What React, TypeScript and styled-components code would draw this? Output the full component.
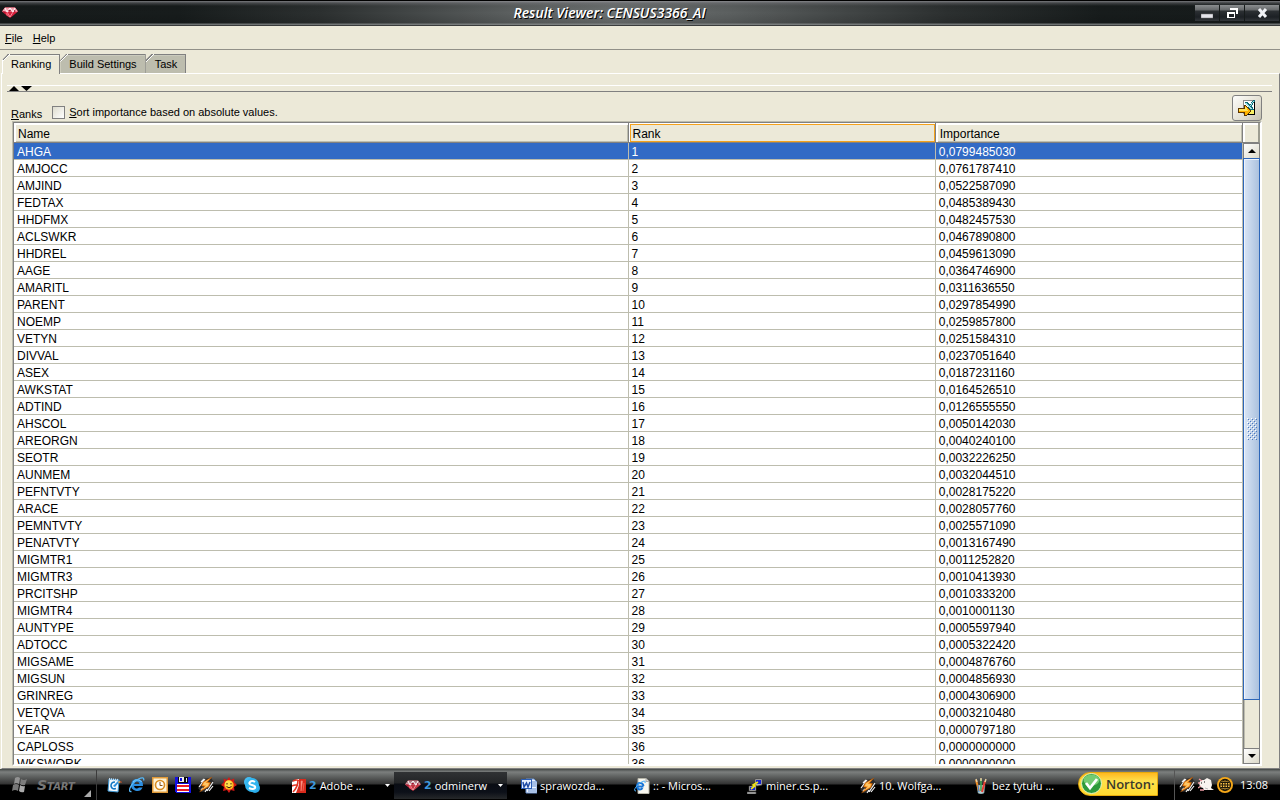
import React, { useState } from "react";
import styled, { createGlobalStyle, css } from "styled-components";

const CREAM = "#ece9d8";
const UI_FONT = '"Liberation Sans", Arial, sans-serif';
const TASK_FONT = '"Open Sans", "Noto Sans", sans-serif';

const GlobalStyle = createGlobalStyle`
  *, *::before, *::after { box-sizing: border-box; }
  html, body { margin: 0; height: 100%; overflow: hidden; }
  #root { height: 100%; }
  button, input { font: inherit; color: inherit; margin: 0; }
`;

const Desktop = styled.div`
  display: flex;
  flex-direction: column;
  height: 100vh;
  background: ${CREAM};
  color: #000;
  font: 11px/14px ${UI_FONT};
`;

/* Title bar */

const TitleBar = styled.header`
  display: flex;
  align-items: center;
  height: 26px;
  flex: none;
  padding: 0 1px 0 2px;
  border-top: 1px solid #000;
  border-bottom: 1px solid #3a3c3c;
  background: linear-gradient(
      to bottom,
      rgba(150, 150, 155, 0.75) 0,
      rgba(110, 110, 115, 0.45) 2px,
      rgba(0, 0, 0, 0.06) 5px,
      rgba(0, 0, 0, 0) 12px,
      rgba(0, 0, 0, 0.12) 22px,
      rgba(130, 134, 134, 0.8) 23px,
      rgba(130, 134, 134, 0.8) 24px
    ),
    linear-gradient(to right, #161b1b 0, #171c1c 14%, #2c3030 25%, #5c6060 40%, #6c7070 48%, #5c6060 57%, #2c3030 74%, #171c1c 86%, #161b1b 100%);
`;

const TitleText = styled.h1`
  flex: 1;
  margin: 0 0 0 6px;
  font: italic 600 14px/18px ${TASK_FONT};
  color: #fff;
  text-align: center;
  text-shadow: 1px 1px 0 #000;
  white-space: nowrap;
`;

const WindowButtons = styled.div`
  align-self: flex-start;
  display: flex;
  gap: 1px;
  padding-top: 4px;
`;

const WindowButton = styled.button<{ $wide?: boolean }>`
  display: flex;
  align-items: center;
  justify-content: center;
  width: ${(p) => (p.$wide ? 34 : 24)}px;
  height: 16px;
  padding: 0;
  border: 0;
  background: linear-gradient(to bottom, #8b8e90 0, #65686a 5px, #2c3033 6px, #1c2024 12px, #33373b 16px);
`;

/* Menu and tabs */

const MenuBar = styled.nav`
  display: flex;
  align-items: center;
  gap: 10px;
  height: 24px;
  flex: none;
  padding-left: 5px;
  border-bottom: 1px solid #919088;
`;

const MenuButton = styled.button`
  padding: 0;
  border: 0;
  background: none;
`;

const TabStrip = styled.div`
  display: flex;
  height: 23px;
  flex: none;
  padding: 4px 0 0 2px;
  position: relative;
`;

const Tab = styled.button<{ $active: boolean }>`
  height: ${(p) => (p.$active ? 20 : 19)}px;
  padding: 0 8px 0 9px;
  border: 0;
  border-right: 1px solid #808080;
  background: linear-gradient(135deg, #808080 0, #808080 5px, #fff 5px, #fff 6px, transparent 6px),
    linear-gradient(to bottom, #808080 0, #808080 1px, ${(p) => (p.$active ? "#fff" : "#d8d8cc")} 1px, transparent 2px),
    ${(p) => (p.$active ? CREAM : "#bdbdae")};
  clip-path: polygon(6px 0, 100% 0, 100% 100%, 0 100%, 0 6px);
  white-space: nowrap;
  z-index: ${(p) => (p.$active ? 1 : 0)};
  ${(p) =>
    p.$active &&
    css`
      padding-bottom: 1px;
      box-shadow: inset 1px 0 0 #fff;
    `}
`;

const Panel = styled.main`
  display: flex;
  flex-direction: column;
  flex: 1;
  min-height: 0;
  margin-left: 1px;
  padding: 10px 0 2px 0;
  border: 1px solid;
  border-color: #fff #808080 #808080 #fff;
`;

const Divider = styled.div`
  display: flex;
  gap: 1px;
  height: 7px;
  flex: none;
  margin: 1px 7px 0 5px;
  padding-left: 2px;
  border-top: 1px solid #fff;
  border-bottom: 1px solid #808080;
`;

const ArrowButton = styled.button`
  display: flex;
  width: 11px;
  height: 5px;
  padding: 0;
  border: 0;
  background: none;
`;

const OptionsRow = styled.div`
  display: flex;
  align-items: flex-end;
  height: 29px;
  flex: none;
  padding: 0 17px 0 9px;
`;

const RanksLabel = styled.span`
  margin-right: 10px;
`;

const CheckLabel = styled.label`
  display: flex;
  align-items: center;
  gap: 4px;
  padding-bottom: 2px;
`;

const Checkbox = styled.input`
  appearance: none;
  width: 13px;
  height: 13px;
  border: 1px solid #808080;
  background: linear-gradient(135deg, #dedcce, #fff);
`;

const ExportButton = styled.button`
  display: flex;
  align-items: center;
  justify-content: center;
  width: 30px;
  height: 26px;
  margin: 0 0 0 auto;
  padding: 0;
  border: 1px solid #808080;
  border-radius: 3px;
  background: linear-gradient(135deg, #fdfdfb, #e2dfd2 60%, #c2bfb0);
`;

/* Ranking table */

const ScrollPane = styled.section`
  display: flex;
  flex: 1;
  min-height: 0;
  margin: 0 17px 0 10px;
  border: 1px solid;
  border-color: #bdbdae #fff #fff #bdbdae;
`;

const PaneInner = styled.div`
  display: flex;
  flex: 1;
  min-width: 0;
  border: 1px solid;
  border-color: #808080 #fff #fff #808080;
`;

const TableView = styled.div`
  flex: 1;
  min-width: 0;
  overflow: hidden;
  background: #fff;
`;

const Table = styled.table`
  width: 100%;
  table-layout: fixed;
  border-collapse: separate;
  border-spacing: 0;
  font-size: 12px;
  line-height: 14px;
`;

const HeadCell = styled.th<{ $focused?: boolean }>`
  height: 20px;
  padding: 2px 4px 0;
  border-right: 1px solid #808080;
  border-bottom: 1px solid #808080;
  background: ${CREAM};
  box-shadow: ${(p) =>
    p.$focused
      ? "inset 1px 1px 0 #fff, inset 2px 2px 0 #f5a21b, inset 0 -1px 0 #f5a21b, inset -1px 0 0 #f5a21b"
      : "inset 2px 2px 0 #fff, inset -1px -1px 0 #bdbdae"};
  font-weight: normal;
  text-align: left;
  &:first-child { width: 50%; }
  &:nth-child(2) { width: 25%; }
`;

const Row = styled.tr<{ $selected?: boolean }>`
  background: ${(p) => (p.$selected ? "#316ac5" : "#fff")};
  color: ${(p) => (p.$selected ? "#fff" : "#000")};
`;

const Cell = styled.td`
  height: 17px;
  padding: 2px 3px 0;
  border-right: 1px solid #bdbdae;
  border-bottom: 1px solid #bdbdae;
  white-space: nowrap;
`;

const ScrollColumn = styled.div`
  display: flex;
  flex-direction: column;
  width: 17px;
  flex: none;
  background: ${CREAM};
`;

const Corner = styled.div`
  height: 20px;
  flex: none;
  border-right: 2px solid #9c9c90;
  border-bottom: 1px solid #808080;
  box-shadow: inset 2px 2px 0 #fff;
`;

const ScrollButton = styled.button`
  display: flex;
  align-items: center;
  justify-content: center;
  height: 16px;
  flex: none;
  padding: 0;
  border: 1px solid #808080;
  background: linear-gradient(135deg, #fff, #dcd9c8);
`;

const Track = styled.div`
  display: flex;
  flex-direction: column;
  flex: 1;
  min-height: 0;
  border: solid #808080;
  border-width: 0 1px;
  box-shadow: inset 1px 0 0 #bdbdae;
`;

const Thumb = styled.div`
  display: flex;
  align-items: center;
  justify-content: center;
  height: 92%;
  margin: -1px -1px 0;
  border: 1px solid #2d66b8;
  box-shadow: inset 1px 1px 0 #eef4fc;
  background: linear-gradient(to right, #d9e5f5, #abc1de);
`;

/* Taskbar */

const TaskBar = styled.footer`
  display: flex;
  height: 31px;
  flex: none;
  border-top: 1px solid #4c504e;
  background: linear-gradient(to bottom, #585c5b 0, #7c7f7e 2px, #686b6a 5px, #333 14px, #000 15px, #000 100%);
  color: #fff;
  font: 11px/16px ${TASK_FONT};
`;

const StartButton = styled.button`
  display: flex;
  align-items: center;
  gap: 8px;
  width: 97px;
  flex: none;
  padding: 0 5px 0 11px;
  border: 0;
  border-right: 1px solid #3c3c3c;
  background: none;
  color: #777;
`;

const StartText = styled.span`
  font: italic 700 14px/16px "DejaVu Sans", sans-serif;
  font-variant: small-caps;
`;

const StartCorner = styled.svg`
  align-self: flex-end;
  flex: none;
  margin: 0 0 3px auto;
`;

const QuickLaunch = styled.div`
  display: flex;
  align-items: center;
  gap: 7px;
  width: 184px;
  flex: none;
  padding-left: 9px;
`;

const IconButton = styled.button`
  display: flex;
  padding: 0;
  border: 0;
  background: none;
`;

const Tasks = styled.div`
  display: grid;
  grid-auto-flow: column;
  grid-auto-columns: minmax(0, 1fr);
  flex: 1;
  min-width: 0;
`;

const TaskButton = styled.button<{ $active?: boolean; $grouped?: boolean }>`
  display: flex;
  align-items: center;
  gap: 3px;
  min-width: 0;
  margin: 2px 0 1px;
  padding: 0 4px 0 ${(p) => (p.$grouped ? 11 : 14)}px;
  border: 0;
  background: ${(p) => (p.$active ? "linear-gradient(to bottom, #303234 0, #222426 11px, #0a0d14 12px, #0c1018 20px, #26282a 27px)" : "none")};
  white-space: nowrap;
`;

const Count = styled.b`
  color: #3d97dc;
  font-family: "DejaVu Sans", sans-serif;
`;

const DropMark = styled.svg`
  margin-left: auto;
`;

const Norton = styled.button`
  display: flex;
  align-items: center;
  gap: 4px;
  width: 80px;
  height: 24px;
  flex: none;
  align-self: center;
  margin: 0 16px 3px 6px;
  padding: 0 0 0 2px;
  border: 1px solid #e6a90c;
  border-radius: 12px 0 0 12px;
  background: linear-gradient(to bottom, #ffb81f 0, #ffe04c 8px, #ffd92f 100%);
  color: #3b3a2c;
  font: 600 13px/20px ${TASK_FONT};
`;

const Tray = styled.div`
  display: flex;
  align-items: center;
  gap: 3px;
  width: 106px;
  flex: none;
  padding-left: 4px;
  border-left: 1px solid #555;
`;

const Clock = styled.time`
  margin-left: 4px;
`;

/* Icons */

const Diamond = ({ dim = false }: { dim?: boolean }) => (
  <svg width="16" height="16" viewBox="0 0 16 16" aria-hidden="true">
    <path d="M3 2.500h10l3 4-6 5-2 1.500-2-1.500-6-5z" fill={dim ? "#c03540" : "#d8203c"} />
    <path d="M3 2.500h10l3 4H0z" fill={dim ? "#b08088" : "#f6a2b0"} />
    <path d="M3 3l2 4 3-4 3 4 2-4" fill="none" stroke="#fff" strokeWidth="1" />
    <path d="M1 6h14M5 7l3 5 3-5" fill="none" stroke="#ffd6dc" strokeWidth=".6" />
    <path d="M1 6l3 1-2 1zM6 5h3l-1 2zM12 5l2 1-2 1z" fill="#a20c28" />
    <path d="M4 8h2l1 4-3-2z" fill="#ef5266" />
  </svg>
);

const ExportIcon = () => (
  <svg width="18" height="18" viewBox="0 0 18 18" shapeRendering="crispEdges" aria-hidden="true">
    <path d="M5 1h10v1h2v13H5z" fill="#8a8a8a" />
    <path d="M6 2h9v1h1v12H6z" fill="#fff" />
    <path d="M16 3h1v13H9v-1h7z" fill="#000" />
    <path d="M13 10h3v5h-5v-2z" fill="#f6ef62" />
    <path d="M6 3h4l2 3 3-5h2v1l-3 5 2 4h-4l-1-2-2 2H7l3-4z" fill="#0c6c78" />
    <path d="M7 4h2l5 6h-2zM15 2h1l-4 6h-1z" fill="#a5e3e6" />
    <path d="M0 9h6V6h2v1h1v1h1v1h1v1h1v1h1v2h-1v1h-1v1h-1v1H9v1H6v-3H0z" fill="#5e3600" />
    <path d="M1 10h6V7h1v1h1v1h1v1h1v1h1v2h-1v1h-1v1H9v1H7v-3H1z" fill="#ffb400" />
    <path d="M1 10h6V8h1v1h1v2h1v1H1z" fill="#ffe35a" />
  </svg>
);

const FlagIcon = () => (
  <svg width="18" height="18" viewBox="0 0 18 18" aria-hidden="true">
    <g fill="#929292">
      <path d="M4 2q3-2 5 0L8 8Q5 6 3 8z" />
      <path d="M10 3q3 2 6 0l-2 6q-3 1-5-1z" fill="#7d7d7d" />
      <path d="M2 9q3-2 6 0l-1 6q-3-2-6 0z" fill="#777" />
      <path d="M9 9q3 2 5 1l-1 6q-3 1-5-1z" fill="#aaa" />
    </g>
  </svg>
);

const NotepadIcon = () => (
  <svg width="16" height="16" viewBox="0 0 16 16" aria-hidden="true">
    <path d="M3 2l10 1-1 12-10-1z" fill="#f4faff" stroke="#3c96d2" />
    <path d="M3 2l10 1" stroke="#cde" strokeDasharray="1 1" strokeWidth="2" />
    <path d="M9 5Q5 5 5 9q1 4 5 2.500" fill="none" stroke="#1478c5" strokeWidth="1.600" />
    <path d="M7 9l6-6 1 1-5 6z" fill="#2b8ddb" />
    <path d="M12 5l1-1 2 1-2 1z" fill="#ffb54e" />
    <path d="M14 4l2 1-1 1z" fill="#d24a22" />
  </svg>
);

const IeIcon = () => (
  <svg width="16" height="16" viewBox="0 0 16 16" aria-hidden="true">
    <path d="M8 2a6 6 0 1 0 5.600 8.500H10q-1.500 1.500-3.500.8Q5 10.500 5 9h9q.3-7-6-7zM5.200 7Q5.800 4.500 8 4.500T10.500 7z" fill="#2c8ee0" fillRule="evenodd" />
    <path d="M4 5q2-3 6-2 2 .7 2.500 2" fill="none" stroke="#9adcff" strokeWidth=".8" />
    <path d="M2.500 14.500Q-.5 15 1 11 3.500 5 9.500 2q6-2.800 5.200 1.500" fill="none" stroke="#56b8f8" strokeWidth="1.300" />
  </svg>
);

const OutlookIcon = () => (
  <svg width="16" height="16" viewBox="0 0 16 16" aria-hidden="true">
    <rect x=".75" y=".75" width="14.500" height="14.500" fill="#fff2d2" stroke="#df9938" strokeWidth="1.500" />
    <circle cx="8" cy="8" r="4.500" fill="#fffef8" stroke="#d98c20" strokeWidth="1.600" />
    <path d="M8 5v3.500h2.500" fill="none" stroke="#8c5414" />
  </svg>
);

const FloppyIcon = () => (
  <svg width="16" height="16" viewBox="0 0 16 16" shapeRendering="crispEdges" aria-hidden="true">
    <path d="M0 0h15l1 1v15H1l-1-1z" fill="#1410e2" />
    <path d="M3 0h10v6H3z" fill="#080808" />
    <path d="M4 0h5v5H4zM11 1h1v4h-1z" fill="#eee" />
    <path d="M5 1h2v3H5z" fill="#1410e2" />
    <path d="M2 7h12v8H2z" fill="#fff" />
    <path d="M2 8h12v2H2zM2 12h12v2H2z" fill="#ed1d24" />
  </svg>
);

const BoltIcon = () => (
  <svg width="16" height="16" viewBox="0 0 16 16" aria-hidden="true">
    <path d="M5 2l8-1 3 4-6 9-7 1-3-4z" fill="#2a2a2a" />
    <path d="M1 10l6-8M3 13l2-2M3 5l3-3M9 14l6-9M11 14l4-5M7 15l2-3" stroke="#f4f4f4" strokeWidth="1.200" />
    <path d="M14 0L5 5 3.500 9l3 .5L1.500 15 11 9.500l1.500-4-3-.5z" fill="#f88c18" stroke="#a34a00" strokeWidth=".4" />
    <path d="M12 1.500L6 5.500 5 8l3 .5-4 4L10 9l1-2.800-3.500-.4z" fill="#ffc768" />
  </svg>
);

const SunIcon = () => (
  <svg width="16" height="16" viewBox="0 0 16 16" aria-hidden="true">
    <path d="M8 0l1.700 3 3.600-1.600L13 5l3 3-3 2 .5 4-3.700-1L8 16l-2-3-4 1 1-4-3-2 3-3-.5-3.500L6 3z" fill="#d51a14" />
    <circle cx="8" cy="8" r="4.700" fill="#ffb81d" />
    <circle cx="7.500" cy="7" r="3.500" fill="#ffdf4a" />
    <path d="M6 6v1.500M10 6v1.500M5.500 9.500q2.500 2.500 5 0" fill="none" stroke="#44200c" />
  </svg>
);

const SkypeIcon = () => (
  <svg width="16" height="16" viewBox="0 0 16 16" aria-hidden="true">
    <circle cx="5" cy="5" r="5" fill="#45bdf3" />
    <circle cx="11" cy="11" r="5" fill="#29a9e8" />
    <circle cx="8" cy="8" r="7" fill="#32b5ef" />
    <path d="M11 5Q8 3 6 5t2 3q4 1 3 3-2 2-6 0" fill="none" stroke="#fff" strokeWidth="2" />
  </svg>
);

const PdfIcon = () => (
  <svg width="14" height="16" viewBox="0 0 14 16" aria-hidden="true">
    <path d="M0 4l5-3h9v14H0z" fill="#d92a1c" />
    <path d="M0 4l5-3h2v6l-3 8H0z" fill="#fff" />
    <path d="M1 3q4-2 6 0M6 2Q6 9 1 14M0 8q4-2 6 0" fill="none" stroke="#e13522" strokeWidth="1.600" />
    <path d="M9 3l1.500 0L9 13zM12 5l-1 8" fill="#ffb4a4" stroke="#f3776a" strokeWidth=".7" />
  </svg>
);

const WordIcon = () => (
  <svg width="16" height="16" viewBox="0 0 16 16" aria-hidden="true">
    <path d="M5 1h8l3 3v11H5z" fill="#edf4ff" stroke="#6c92cf" />
    <path d="M11 4h4M11 6h4M11 8h4M7 11h8M7 13h8" stroke="#618acb" />
    <rect x=".5" y="1.500" width="10" height="9" fill="#e9f1ff" stroke="#2b5db5" />
    <path d="M2 4l1 5 2.500-4L7 9l2-5" fill="none" stroke="#204ca6" strokeWidth="1.500" />
  </svg>
);

const IePageIcon = () => (
  <svg width="16" height="16" viewBox="0 0 16 16" aria-hidden="true">
    <path d="M4 .5h8l3 3v12H4z" fill="#f8f7ef" stroke="#b8b7aa" />
    <path d="M12 .5v3h3" fill="#ddd" stroke="#aaa" />
    <path d="M9.500 8.500H3q.5 3 3 3 1.500 0 2.500-1.500" fill="none" stroke="#1975d6" strokeWidth="2" />
    <path d="M9.500 8Q9 5 6 5T3 8.500" fill="none" stroke="#1975d6" strokeWidth="2" />
    <path d="M2 13Q-1 13 2 9q3-5 8-6 2 0 1 2" fill="none" stroke="#4cacf4" />
  </svg>
);

const PuttyIcon = () => (
  <svg width="16" height="16" viewBox="0 0 16 16" aria-hidden="true">
    <path d="M8 1h7v6l-5 1-2-1zM2 8h7v5H2zM0 14h9v2H0z" fill="#b5b5b5" stroke="#444" strokeWidth=".6" />
    <path d="M9 2h5v4H9zM3 9h5v3H3z" fill="#1624d3" />
    <path d="M11 4L6 7l2 1-4 3" fill="none" stroke="#f5e416" strokeWidth="1.600" />
  </svg>
);

const PaintIcon = () => (
  <svg width="16" height="16" viewBox="0 0 16 16" aria-hidden="true">
    <path d="M4 7h8l-1 8q-3 2-6 0z" fill="#b4cdd1" stroke="#6b8a8e" strokeWidth=".5" />
    <path d="M3 2l3 11" stroke="#f28f27" strokeWidth="2" />
    <path d="M8 1v12" stroke="#40a552" strokeWidth="1.600" />
    <path d="M12 3l-3 11" stroke="#e73e32" strokeWidth="2" />
    <path d="M3 1l1 3M8 0v3M13 1l-1 3" stroke="#ead1a4" strokeWidth="1.500" />
    <path d="M5 7l1 7" stroke="#3e83d9" />
  </svg>
);

const MouseIcon = () => (
  <svg width="16" height="16" viewBox="0 0 16 16" aria-hidden="true">
    <path d="M3 3l3 0 3-2 4 2 1 5-1 3 3 2H6l-1-2-3-1-1-4z" fill="#f8f4ef" />
    <path d="M1 2l3 2M0 6h2M0 11l3-2M6 13H2" stroke="#ed9ba2" strokeWidth="1.300" />
    <path d="M3 6h1M6 5h1" stroke="#111" strokeWidth="1.200" />
    <path d="M7 11l3 1" stroke="#bbb" />
  </svg>
);

const GlobeIcon = () => (
  <svg width="16" height="16" viewBox="0 0 16 16" aria-hidden="true">
    <circle cx="8" cy="8" r="8" fill="#f6a819" />
    <circle cx="8" cy="8" r="5.500" fill="#ffc549" stroke="#1c1709" strokeWidth="1.300" />
    <path d="M2.500 8h11M8 2.500v11M4 5.500h8M4 10.500h8" stroke="#1c1709" />
    <ellipse cx="8" cy="8" rx="2.700" ry="5.500" fill="none" stroke="#1c1709" />
  </svg>
);

const CheckBadge = () => (
  <svg width="21" height="21" viewBox="0 0 21 21" aria-hidden="true">
    <circle cx="10.500" cy="10.500" r="10" fill="#2d9a3b" stroke="#e5f4c3" />
    <ellipse cx="10.500" cy="7" rx="8" ry="5.500" fill="#75cc72" />
    <path d="M5 10l4 5 7-9" fill="none" stroke="#fff" strokeWidth="2.800" />
  </svg>
);

const Triangle = ({ up }: { up?: boolean }) => (
  <svg width="11" height="5" viewBox="0 0 11 5" aria-hidden="true">
    <path d={up ? "M0 5h10L5 0z" : "M0 0h11L5.500 5z"} fill="#000" />
  </svg>
);

const SmallTriangle = ({ up }: { up?: boolean }) => (
  <svg width="8" height="4" viewBox="0 0 8 4" aria-hidden="true">
    <path d={up ? "M0 4h8L4 0z" : "M0 0h8L4 4z"} fill="#000" />
  </svg>
);

const Grip = () => (
  <svg width="10" height="22" aria-hidden="true">
    <defs>
      <pattern id="grip" width="4" height="4" patternUnits="userSpaceOnUse">
        <path d="M0 0h1v1H0zM2 2h1v1H2z" fill="#fff" />
        <path d="M1 1h1v1H1zM3 3h1v1H3z" fill="#4a78c0" />
      </pattern>
    </defs>
    <rect width="10" height="22" fill="url(#grip)" />
  </svg>
);

const rankings: [string, number, string][] = [
  ["AHGA", 1, "0,0799485030"],
  ["AMJOCC", 2, "0,0761787410"],
  ["AMJIND", 3, "0,0522587090"],
  ["FEDTAX", 4, "0,0485389430"],
  ["HHDFMX", 5, "0,0482457530"],
  ["ACLSWKR", 6, "0,0467890800"],
  ["HHDREL", 7, "0,0459613090"],
  ["AAGE", 8, "0,0364746900"],
  ["AMARITL", 9, "0,0311636550"],
  ["PARENT", 10, "0,0297854990"],
  ["NOEMP", 11, "0,0259857800"],
  ["VETYN", 12, "0,0251584310"],
  ["DIVVAL", 13, "0,0237051640"],
  ["ASEX", 14, "0,0187231160"],
  ["AWKSTAT", 15, "0,0164526510"],
  ["ADTIND", 16, "0,0126555550"],
  ["AHSCOL", 17, "0,0050142030"],
  ["AREORGN", 18, "0,0040240100"],
  ["SEOTR", 19, "0,0032226250"],
  ["AUNMEM", 20, "0,0032044510"],
  ["PEFNTVTY", 21, "0,0028175220"],
  ["ARACE", 22, "0,0028057760"],
  ["PEMNTVTY", 23, "0,0025571090"],
  ["PENATVTY", 24, "0,0013167490"],
  ["MIGMTR1", 25, "0,0011252820"],
  ["MIGMTR3", 26, "0,0010413930"],
  ["PRCITSHP", 27, "0,0010333200"],
  ["MIGMTR4", 28, "0,0010001130"],
  ["AUNTYPE", 29, "0,0005597940"],
  ["ADTOCC", 30, "0,0005322420"],
  ["MIGSAME", 31, "0,0004876760"],
  ["MIGSUN", 32, "0,0004856930"],
  ["GRINREG", 33, "0,0004306900"],
  ["VETQVA", 34, "0,0003210480"],
  ["YEAR", 35, "0,0000797180"],
  ["CAPLOSS", 36, "0,0000000000"],
  ["WKSWORK", 36, "0,0000000000"],
];

const quickLaunch = [
  { label: "Notepad", icon: <NotepadIcon /> },
  { label: "Internet Explorer", icon: <IeIcon /> },
  { label: "Outlook", icon: <OutlookIcon /> },
  { label: "Commander", icon: <FloppyIcon /> },
  { label: "Winamp", icon: <BoltIcon /> },
  { label: "Messenger", icon: <SunIcon /> },
  { label: "Skype", icon: <SkypeIcon /> },
];

const tasks: { text: string; icon: React.ReactNode; count?: number; active?: boolean }[] = [
  { text: "Adobe ...", icon: <PdfIcon />, count: 2 },
  { text: "odminerw", icon: <Diamond dim />, count: 2, active: true },
  { text: "sprawozda...", icon: <WordIcon /> },
  { text: ":: - Micros...", icon: <IePageIcon /> },
  { text: "miner.cs.p...", icon: <PuttyIcon /> },
  { text: "10. Wolfga...", icon: <BoltIcon /> },
  { text: "bez tytułu ...", icon: <PaintIcon /> },
];

const tabs = ["Ranking", "Build Settings", "Task"];

export default function App() {
  const [tab, setTab] = useState("Ranking");
  const [selected, setSelected] = useState(0);

  return (
    <Desktop>
      <GlobalStyle />
      <TitleBar>
        <Diamond />
        <TitleText>Result Viewer: CENSUS3366_AI</TitleText>
        <WindowButtons>
          <WindowButton aria-label="Minimize">
            <svg width="12" height="12"><path d="M0 7h12v4H0z" fill="#e4e4ea" stroke="#777" strokeWidth=".5" /></svg>
          </WindowButton>
          <WindowButton aria-label="Restore">
            <svg width="11" height="12" shapeRendering="crispEdges">
              <path d="M3 1h8v6H9V3H3zM0 5h8v6H0zM2 7v3h5V7z" fill="#fff" fillRule="evenodd" />
            </svg>
          </WindowButton>
          <WindowButton aria-label="Close" $wide>
            <svg width="11" height="11"><path d="M2 1l7 8M9 1L2 9" stroke="#f0f2f6" strokeWidth="3" /></svg>
          </WindowButton>
        </WindowButtons>
      </TitleBar>

      <MenuBar>
        <MenuButton><u>F</u>ile</MenuButton>
        <MenuButton><u>H</u>elp</MenuButton>
      </MenuBar>

      <TabStrip role="tablist">
        {tabs.map((name) => (
          <Tab key={name} role="tab" aria-selected={tab === name} $active={tab === name} onClick={() => setTab(name)}>
            {name}
          </Tab>
        ))}
      </TabStrip>

      <Panel>
        <Divider>
          <ArrowButton aria-label="Collapse"><Triangle up /></ArrowButton>
          <ArrowButton aria-label="Expand"><Triangle /></ArrowButton>
        </Divider>
        <OptionsRow>
          <RanksLabel><u>R</u>anks</RanksLabel>
          <CheckLabel>
            <Checkbox type="checkbox" />
            <span><u>S</u>ort importance based on absolute values.</span>
          </CheckLabel>
          <ExportButton aria-label="Export"><ExportIcon /></ExportButton>
        </OptionsRow>

        <ScrollPane>
          <PaneInner>
            <TableView>
              <Table>
                <thead>
                  <tr>
                    <HeadCell scope="col">Name</HeadCell>
                    <HeadCell scope="col" $focused>Rank</HeadCell>
                    <HeadCell scope="col">Importance</HeadCell>
                  </tr>
                </thead>
                <tbody>
                  {rankings.map(([name, rank, importance], i) => (
                    <Row key={name} $selected={i === selected} onClick={() => setSelected(i)}>
                      <Cell>{name}</Cell>
                      <Cell>{rank}</Cell>
                      <Cell>{importance}</Cell>
                    </Row>
                  ))}
                </tbody>
              </Table>
            </TableView>
            <ScrollColumn>
              <Corner />
              <ScrollButton aria-label="Scroll up"><SmallTriangle up /></ScrollButton>
              <Track>
                <Thumb><Grip /></Thumb>
              </Track>
              <ScrollButton aria-label="Scroll down"><SmallTriangle /></ScrollButton>
            </ScrollColumn>
          </PaneInner>
        </ScrollPane>
      </Panel>

      <TaskBar>
        <StartButton>
          <FlagIcon />
          <StartText>Start</StartText>
          <StartCorner width="7" height="7" aria-hidden="true"><path d="M7 0v7H0z" fill="#aaa" /></StartCorner>
        </StartButton>
        <QuickLaunch>
          {quickLaunch.map((q) => (
            <IconButton key={q.label} aria-label={q.label}>{q.icon}</IconButton>
          ))}
        </QuickLaunch>
        <Tasks>
          {tasks.map((t) => (
            <TaskButton key={t.text} $active={t.active} $grouped={!!t.count}>
              {t.icon}
              {t.count && <Count>{t.count}</Count>}
              <span>{t.text}</span>
              {t.count && <DropMark width="5" height="3" aria-hidden="true"><path d="M0 0h5L2.500 3z" fill="#fff" /></DropMark>}
            </TaskButton>
          ))}
        </Tasks>
        <Norton><CheckBadge />Norton·</Norton>
        <Tray>
          <BoltIcon />
          <MouseIcon />
          <GlobeIcon />
          <Clock>13:08</Clock>
        </Tray>
      </TaskBar>
    </Desktop>
  );
}
